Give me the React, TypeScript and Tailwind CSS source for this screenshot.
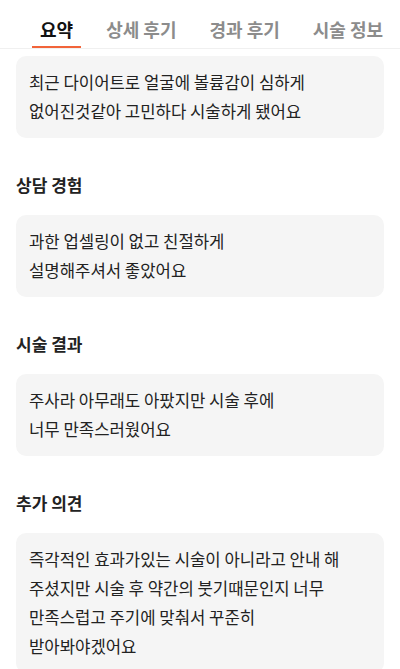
import React from "react";

const tabs = ["요약", "상세 후기", "경과 후기", "시술 정보"];

const sections: { title?: string; lines: string[] }[] = [
  { lines: ["최근 다이어트로 얼굴에 볼륨감이 심하게", "없어진것같아 고민하다 시술하게 됐어요"] },
  { title: "상담 경험", lines: ["과한 업셀링이 없고 친절하게", "설명해주셔서 좋았어요"] },
  { title: "시술 결과", lines: ["주사라 아무래도 아팠지만 시술 후에", "너무 만족스러웠어요"] },
  {
    title: "추가 의견",
    lines: [
      "즉각적인 효과가있는 시술이 아니라고 안내 해",
      "주셨지만 시술 후 약간의 붓기때문인지 너무",
      "만족스럽고 주기에 맞춰서 꾸준히",
      "받아봐야겠어요",
    ],
  },
];

export default function App() {
  return (
    <div
      className="w-[400px] h-[669px] overflow-hidden bg-white text-[#222]"
      style={{ fontFamily: '"Noto Sans CJK KR", "Noto Sans", sans-serif' }}
    >
      {/* Tabs */}
      <div className="h-[49px] border-b border-[#f0f0f0] flex pl-[32px] gap-[17px]">
        {tabs.map((t, i) => (
          <div
            key={t}
            className={
              i === 0
                ? "h-[48px] px-[8px] pt-[19px] pb-[7px] leading-[20px] text-[18px] font-bold text-[#111] border-b-2 border-[#f2643a]"
                : "h-[48px] px-[8px] pt-[19px] pb-[7px] leading-[20px] text-[18px] font-bold text-[#8c8c8c] border-b-2 border-transparent"
            }
          >
            {t}
          </div>
        ))}
      </div>

      {/* Content */}
      <div className="px-4 pt-[7px]">
        {sections.map((s, i) => (
          <div key={i}>
            {s.title && (
              <h3 className="mt-[35px] mb-[18px] text-[17px] leading-[24px] font-bold text-[#222]">
                {s.title}
              </h3>
            )}
            <div className="rounded-[10px] bg-[#f5f5f5] px-[13px] py-[12px] text-[16.7px] leading-[29px] text-[#222]">
              {s.lines.map((l) => (
                <div key={l} className="whitespace-nowrap">
                  {l}
                </div>
              ))}
            </div>
          </div>
        ))}
      </div>
    </div>
  );
}
